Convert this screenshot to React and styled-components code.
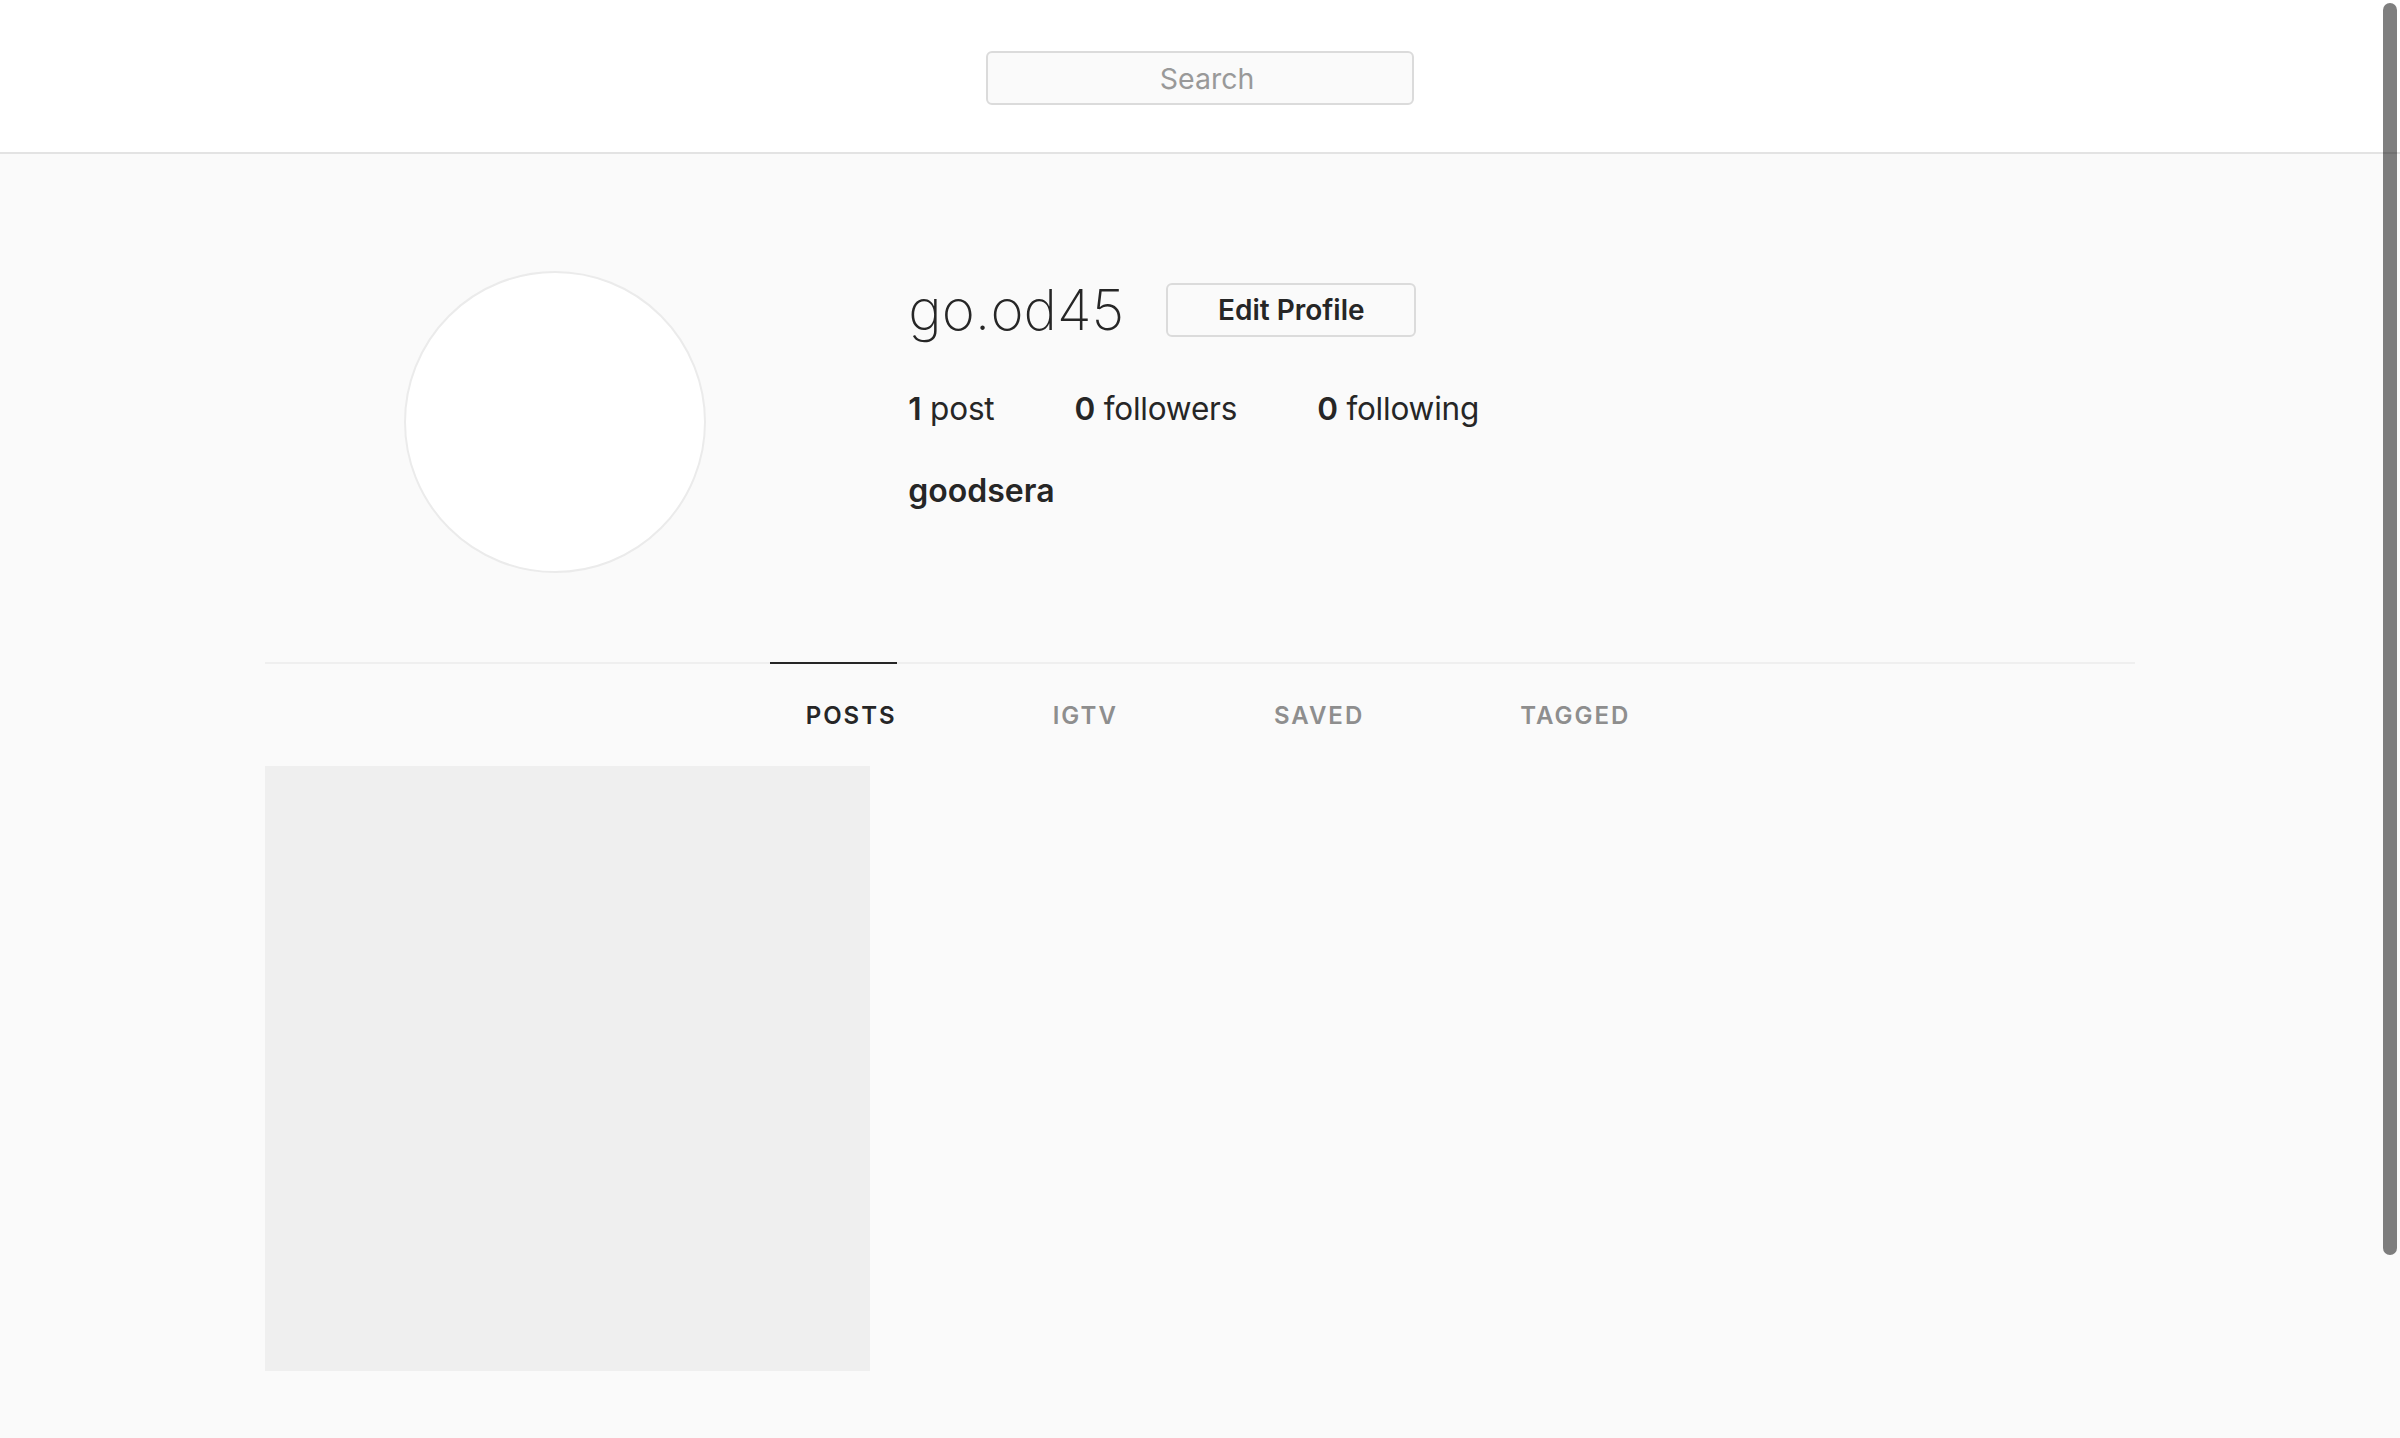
import React from "react";
import styled, { createGlobalStyle } from "styled-components";

const GlobalStyle = createGlobalStyle`
  html, body {
    margin: 0;
    padding: 0;
    background: #fafafa;
    font-family: Inter, "Noto Sans", "Liberation Sans", sans-serif;
    color: #262626;
  }
  * { box-sizing: border-box; }
`;

const TopBar = styled.header`
  height: 154px;
  background: #ffffff;
  border-bottom: 2px solid #e3e3e3;
  display: flex;
  justify-content: center;
  padding-top: 51px;
`;

const SearchBox = styled.div`
  width: 428px;
  height: 54px;
  background: #fafafa;
  border: 2px solid #dbdbdb;
  border-radius: 6px;
  display: flex;
  align-items: center;
  justify-content: center;
  padding-left: 14px;
  font-size: 28.5px;
  color: #999999;
`;

const Main = styled.main`
  width: 1870px;
  margin: 0 auto;
  padding-top: 117px;
`;

const ProfileHeader = styled.section`
  display: flex;
  margin-bottom: 89px;
`;

const AvatarCol = styled.div`
  flex: 1 1 0;
  margin-right: 60px;
  display: flex;
  justify-content: center;
`;

const Avatar = styled.div`
  width: 302px;
  height: 302px;
  border-radius: 50%;
  background: #ffffff;
  border: 2px solid #ebebeb;
  margin-left: -3px;
`;

const Info = styled.div`
  flex: 2 1 60px;
  padding-top: 7px;
`;

const TitleRow = styled.div`
  display: flex;
  align-items: center;
  height: 64px;
`;

const Username = styled.h2`
  margin: 0;
  font-size: 56.5px;
  font-weight: 250;
  line-height: 64px;
  color: #262626;
`;

const EditButton = styled.button`
  margin-left: 42px;
  width: 250px;
  height: 54px;
  background: transparent;
  border: 2px solid #dbdbdb;
  border-radius: 6px;
  font-family: inherit;
  font-size: 28px;
  font-weight: 600;
  color: #262626;
  padding: 0;
`;

const Stats = styled.ul`
  list-style: none;
  margin: 43px 0 34px;
  padding: 0;
  display: flex;
  font-size: 31.5px;
  letter-spacing: -0.2px;
  line-height: 48px;
`;

const Stat = styled.li`
  margin-right: 80px;
  b { font-weight: 600; }
`;

const FullName = styled.h1`
  margin: 0;
  font-size: 32px;
  line-height: 48px;
  font-weight: 600;
`;

const Tabs = styled.nav`
  border-top: 2px solid #efefef;
  display: flex;
  justify-content: center;
  gap: 120px;
`;

const Tab = styled.a`
  height: 104px;
  margin-top: -2px;
  border-top: 2px solid ${(p) => (p.$active ? "#262626" : "transparent")};
  display: flex;
  align-items: center;
  padding-left: 36px;
  font-size: 24px;
  font-weight: 600;
  letter-spacing: 2px;
  color: ${(p) => (p.$active ? "#262626" : "#8e8e8e")};
`;

const Grid = styled.div`
  display: grid;
  grid-template-columns: repeat(3, 1fr);
  gap: 28px;
`;

const PostTile = styled.div`
  aspect-ratio: 1 / 1;
  background: #efefef;
`;

const ScrollThumb = styled.div`
  position: fixed;
  top: 3px;
  right: 3px;
  width: 14px;
  height: 1252px;
  border-radius: 7px;
  background: rgba(0, 0, 0, 0.5);
`;

const tabs = ["POSTS", "IGTV", "SAVED", "TAGGED"];

export default function App() {
  return (
    <>
      <GlobalStyle />
      <TopBar>
        <SearchBox>Search</SearchBox>
      </TopBar>
      <Main>
        <ProfileHeader>
          <AvatarCol>
            <Avatar />
          </AvatarCol>
          <Info>
            <TitleRow>
              <Username>go.od45</Username>
              <EditButton>Edit Profile</EditButton>
            </TitleRow>
            <Stats>
              <Stat><b>1</b> post</Stat>
              <Stat><b>0</b> followers</Stat>
              <Stat><b>0</b> following</Stat>
            </Stats>
            <FullName>goodsera</FullName>
          </Info>
        </ProfileHeader>
        <Tabs>
          {tabs.map((t, i) => (
            <Tab key={t} $active={i === 0}>{t}</Tab>
          ))}
        </Tabs>
        <Grid>
          <PostTile />
        </Grid>
      </Main>
      <ScrollThumb />
    </>
  );
}
